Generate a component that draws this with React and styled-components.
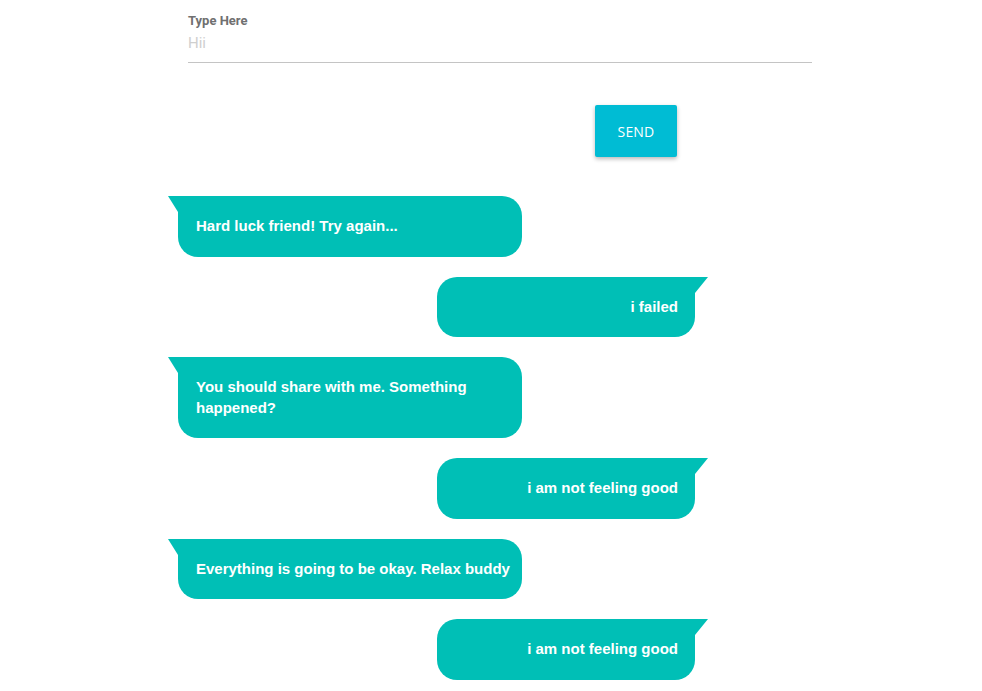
import React from 'react';
import styled, { createGlobalStyle } from 'styled-components';

const GlobalStyle = createGlobalStyle`
  html, body {
    margin: 0;
    padding: 0;
    background: #fff;
  }
`;

const Page = styled.div`
  display: flex;
  flex-direction: column;
  padding-top: 13px;
`;

const Form = styled.div`
  display: flex;
  flex-direction: column;
  margin-left: 188px;
  width: 624px;
`;

const Label = styled.label`
  font-family: Roboto, 'Liberation Sans', sans-serif;
  font-size: 13px;
  font-weight: 700;
  color: #707070;
  line-height: 16px;
`;

const Input = styled.input`
  border: none;
  border-bottom: 1px solid #c4c4c4;
  outline: none;
  padding: 5px 0 10px;
  font-family: Roboto, 'Liberation Sans', sans-serif;
  font-size: 15px;
  line-height: 18px;
  color: #333;
  background: transparent;

  &::placeholder {
    color: #cfcfcf;
  }
`;

const ButtonRow = styled.div`
  display: flex;
  margin-top: 42px;
  padding-left: 595px;
`;

const SendButton = styled.button`
  width: 82px;
  height: 52px;
  border: none;
  border-radius: 2px;
  background: #00bcd4;
  color: #fff;
  font-family: 'Open Sans', sans-serif;
  font-size: 14px;
  letter-spacing: 0.2px;
  box-shadow: 0 2px 4px rgba(0, 0, 0, 0.28);
  cursor: pointer;
`;

const Chat = styled.div`
  display: flex;
  flex-direction: column;
  gap: 20px;
  width: 517px;
  margin: 39px 0 0 178px;
`;

const Bubble = styled.div`
  position: relative;
  box-sizing: border-box;
  align-self: ${(p) => (p.$mine ? 'flex-end' : 'flex-start')};
  width: ${(p) => (p.$mine ? '258px' : '344px')};
  padding: ${(p) => (p.$mine ? '20px 17px 20px 18px' : '20px 6px 20px 18px')};
  background: #00bfb6;
  color: #fff;
  font-family: 'Liberation Sans', Arial, sans-serif;
  font-weight: 700;
  font-size: 15px;
  line-height: 20.5px;
  text-align: ${(p) => (p.$mine ? 'right' : 'left')};
  border-radius: ${(p) => (p.$mine ? '20px 0 20px 20px' : '0 20px 20px 20px')};

  &::before {
    content: '';
    position: absolute;
    top: 0;
    width: 0;
    height: 0;
    border-top: 16px solid #00bfb6;
    ${(p) =>
      p.$mine
        ? 'right: -13px; border-right: 13px solid transparent;'
        : 'left: -10px; border-left: 10px solid transparent;'}
  }
`;

const messages = [
  { mine: false, text: 'Hard luck friend! Try again...' },
  { mine: true, text: 'i failed' },
  { mine: false, text: 'You should share with me. Something happened?' },
  { mine: true, text: 'i am not feeling good' },
  { mine: false, text: 'Everything is going to be okay. Relax buddy' },
  { mine: true, text: 'i am not feeling good' },
];

const App = () => {
  return (
    <Page>
      <GlobalStyle />
      <Form>
        <Label htmlFor='msg'>Type Here</Label>
        <Input id='msg' placeholder='Hii' />
      </Form>
      <ButtonRow>
        <SendButton>SEND</SendButton>
      </ButtonRow>
      <Chat>
        {messages.map((m, i) => (
          <Bubble key={i} $mine={m.mine}>
            {m.text}
          </Bubble>
        ))}
      </Chat>
    </Page>
  );
};

export default App;
